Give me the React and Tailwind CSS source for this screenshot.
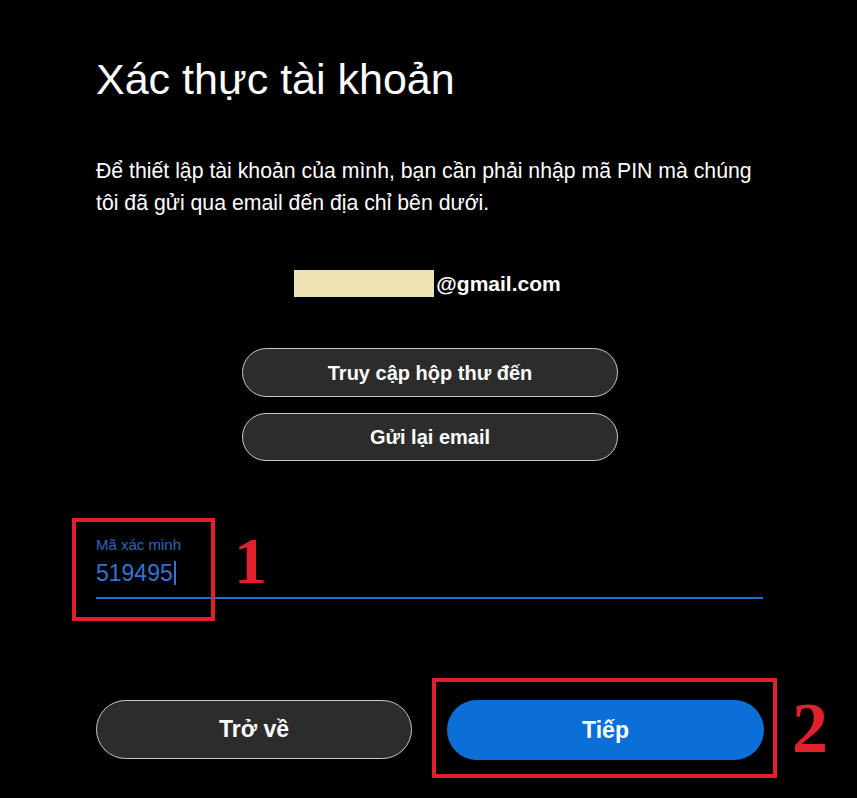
export default function App() {
  return (
    <div className="min-h-[798px] w-full bg-black text-white font-['Liberation_Sans',Arial,sans-serif]">
      <div className="ml-[96px] w-[668px] pt-[55px]">
        <h1 className="text-[43px] leading-[48px] font-normal">Xác thực tài khoản</h1>

        <p className="mt-[52px] text-[21.25px] leading-[32px]">
          Để thiết lập tài khoản của mình, bạn cần phải nhập mã PIN mà chúng tôi đã gửi qua email đến địa chỉ bên dưới.
        </p>

        <div className="mt-[51px] flex h-[27px] items-center justify-center">
          <span className="h-[27px] w-[140px] bg-[#ede3b5]" />
          <span className="ml-[2px] mr-[5px] text-[21px] font-bold">@gmail.com</span>
        </div>

        <div className="mt-[51px] flex flex-col items-center gap-[16px]">
          <button className="h-[49px] w-[376px] rounded-full border border-[#c9c9c9] bg-[#2c2c2c] text-[20px] font-bold text-white">
            Truy cập hộp thư đến
          </button>
          <button className="h-[48px] w-[376px] rounded-full border border-[#c9c9c9] bg-[#2c2c2c] text-[20px] font-bold text-white">
            Gửi lại email
          </button>
        </div>

        <div className="relative mt-[76px]">
          <div className="text-[15px] leading-[16px] text-[#2d66bd]">Mã xác minh</div>
          <div className="mt-[8px] flex h-[24px] items-center text-[23px] leading-[24px] text-[#3273d4]">
            519495
            <span className="ml-[1px] h-[24px] w-[2px] bg-[#3273d4]" />
          </div>
          <div className="mt-[12px] h-[2px] w-[667px] bg-[#1f6fcf]" />

          <div className="absolute left-[-24px] top-[-19px] h-[103px] w-[143px] border-[4px] border-[#e0212b]" />
          <span className="absolute left-[138px] top-[-16px] font-['Liberation_Serif',serif] text-[66px] font-bold leading-[80px] text-[#e0212b]">
            1
          </span>
        </div>

        <div className="relative mt-[101px] flex gap-[34px]">
          <button className="h-[59px] w-[317px] rounded-full border border-[#c9c9c9] bg-[#2c2c2c] text-[23px] font-bold text-white">
            Trở về
          </button>
          <button className="ml-[1px] h-[60px] w-[318px] rounded-full bg-[#0a70d8] text-[23px] font-bold text-white">
            Tiếp
          </button>

          <div className="absolute left-[336px] top-[-22px] h-[100px] w-[345px] border-[4px] border-[#e0212b]" />
          <span className="absolute left-[696px] top-[-14px] font-['Liberation_Serif',serif] text-[72px] font-bold leading-[84px] text-[#e0212b]">
            2
          </span>
        </div>
      </div>
    </div>
  )
}
